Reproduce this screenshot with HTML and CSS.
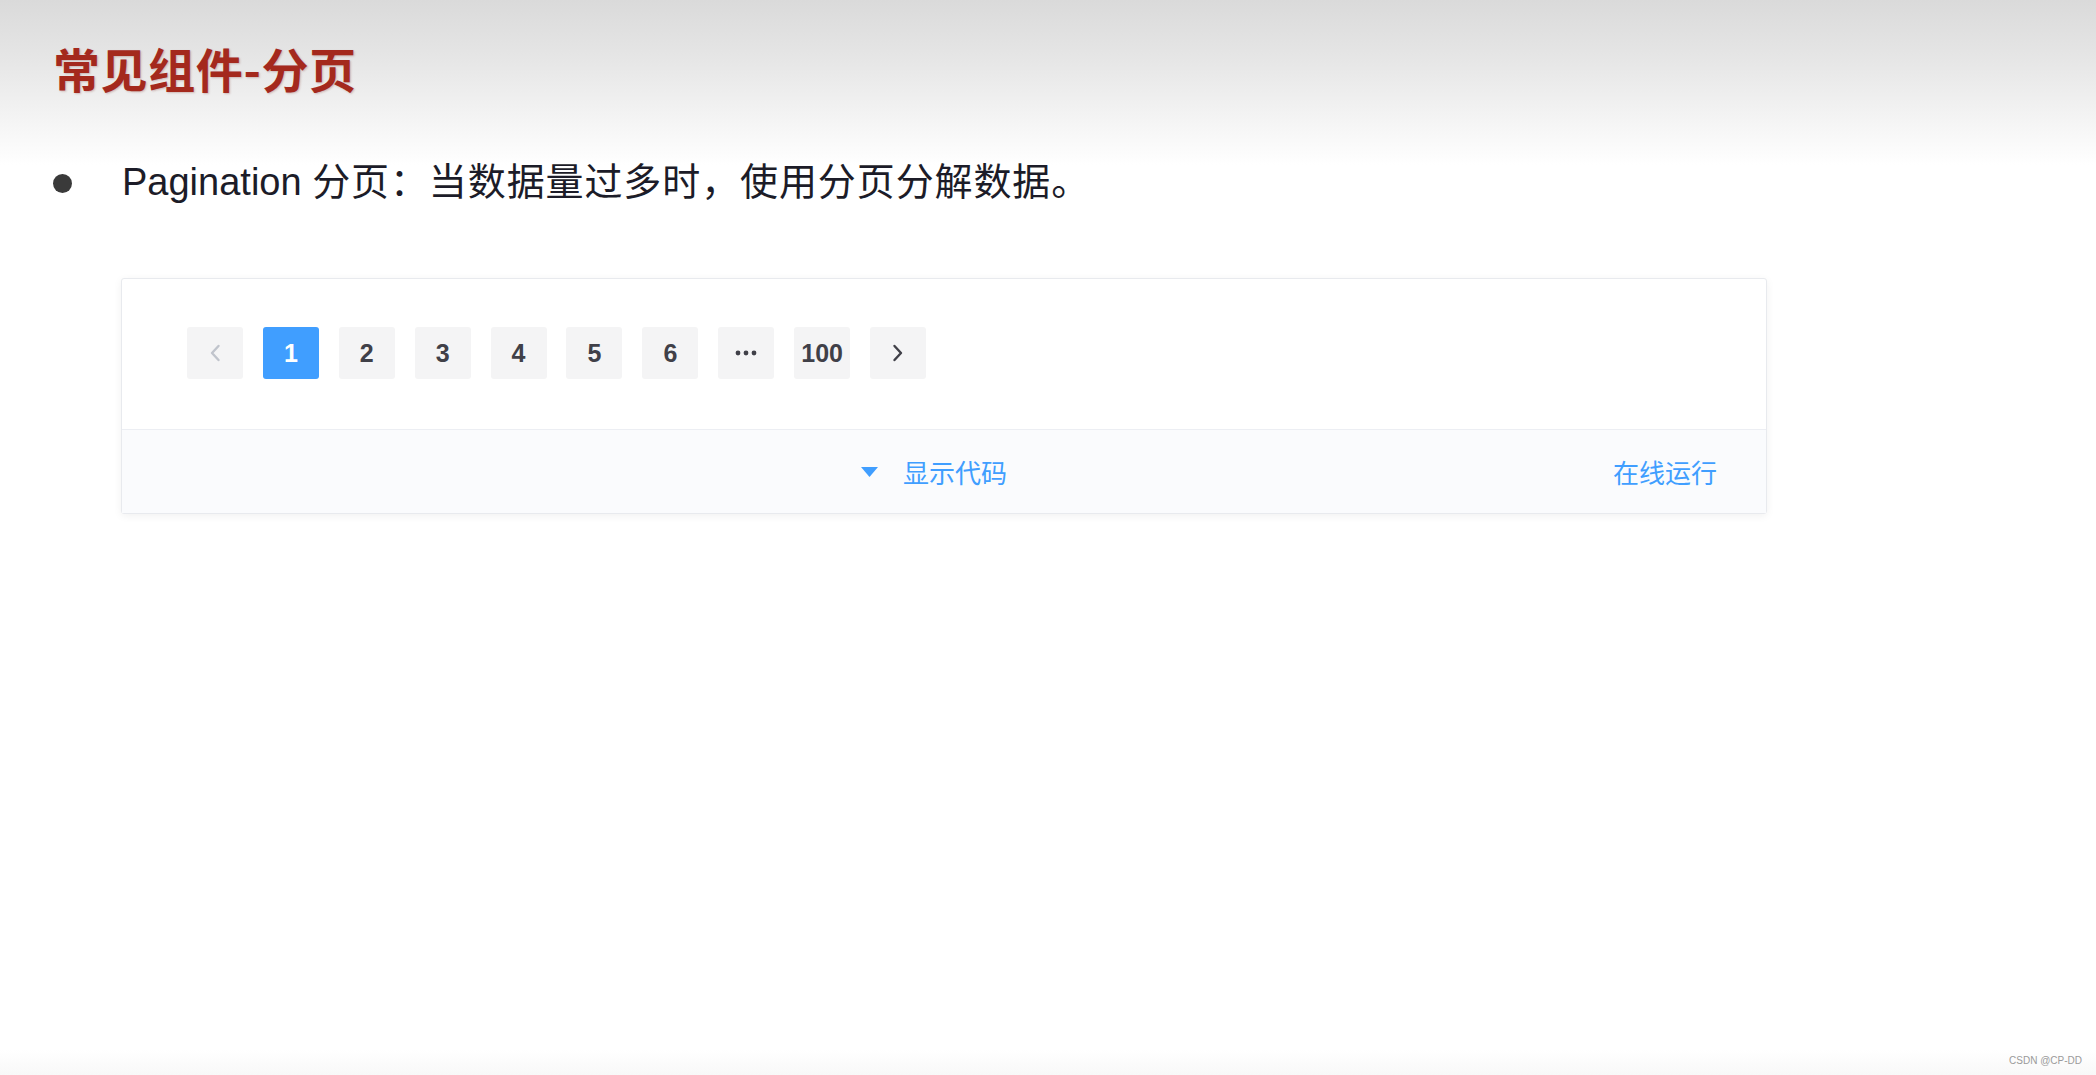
FILE: index.html
```html
<!DOCTYPE html>
<html lang="zh-CN">
<head>
<meta charset="utf-8">
<title>常见组件-分页</title>
<link rel="stylesheet" href="styles.css">
</head>
<body>
<div class="page">
  <header class="slide-head">
    <h1 class="slide-title">常见组件-分页</h1>
  </header>

  <ul class="points">
    <li class="point"><span class="dot"></span><span class="point-text">Pagination <span class="cjk">分页：当数据量过多时，使用分页分解数据。</span></span></li>
  </ul>

  <section class="demo">
    <div class="demo-body">
      <ul class="pager">
        <li class="pg pg-arrow is-disabled">
          <svg class="chev" width="12" height="18" viewBox="0 0 12 18"><path d="M9.5 2 L3 9 L9.5 16" fill="none" stroke="currentColor" stroke-width="2.4" stroke-linecap="round" stroke-linejoin="round"/></svg>
        </li>
        <li class="pg is-active">1</li>
        <li class="pg">2</li>
        <li class="pg">3</li>
        <li class="pg">4</li>
        <li class="pg">5</li>
        <li class="pg">6</li>
        <li class="pg pg-more">
          <svg width="22" height="6" viewBox="0 0 22 6"><circle cx="3" cy="3" r="2.4" fill="currentColor"/><circle cx="11" cy="3" r="2.4" fill="currentColor"/><circle cx="19" cy="3" r="2.4" fill="currentColor"/></svg>
        </li>
        <li class="pg">100</li>
        <li class="pg pg-arrow">
          <svg class="chev" width="12" height="18" viewBox="0 0 12 18"><path d="M2.5 2 L9 9 L2.5 16" fill="none" stroke="currentColor" stroke-width="2.4" stroke-linecap="round" stroke-linejoin="round"/></svg>
        </li>
      </ul>
    </div>
    <div class="demo-bar">
      <div class="toggle">
        <svg class="caret" width="17" height="10" viewBox="0 0 17 10"><polygon points="0,0 17,0 8.5,10" fill="currentColor"/></svg>
        <span>显示代码</span>
      </div>
      <a class="run">在线运行</a>
    </div>
  </section>

  <footer class="mark">CSDN @CP-DD</footer>
</div>
</body>
</html>
```

FILE: styles.css
```css
html, body {
  margin: 0;
  padding: 0;
}

body {
  width: 2096px;
  height: 1075px;
  overflow: hidden;
  background: #ffffff;
  font-family: "Liberation Sans", "Noto Sans CJK SC", sans-serif;
}

.page {
  display: flex;
  flex-direction: column;
  height: 1075px;
  background: linear-gradient(to bottom,
    #dadada 0px,
    #e6e6e6 60px,
    #f4f4f4 120px,
    #ffffff 165px,
    #ffffff 1050px,
    #f8f8f8 1075px);
}

.slide-head {
  padding: 44px 0 0 53px;
}

.slide-title {
  margin: 0;
  font-family: "Noto Sans CJK SC", sans-serif;
  font-size: 47px;
  line-height: 47px;
  font-weight: 700;
  letter-spacing: 0.6px;
  color: #a4291d;
  text-shadow: 1px 1px 2px rgba(120, 30, 20, 0.25);
}

.points {
  list-style: none;
  margin: 69px 0 0 0;
  padding: 0 0 0 53px;
}

.point {
  display: flex;
  align-items: center;
  gap: 50px;
}

.dot {
  width: 19px;
  height: 19px;
  border-radius: 50%;
  background: #3a3a3a;
  flex: none;
  margin-top: 3px;
}

.point-text {
  font-family: "Liberation Sans", "Noto Sans CJK SC", sans-serif;
  font-size: 38px;
  line-height: 44px;
  color: #1c1c28;
}

.cjk {
  letter-spacing: 0.9px;
}

.demo {
  margin: 74px 0 0 121px;
  width: 1646px;
  box-sizing: border-box;
  border: 1px solid #e8eaee;
  border-radius: 3px;
  background: #ffffff;
  box-shadow: 0 2px 8px rgba(0, 0, 0, 0.06);
}

.demo-body {
  padding: 48px 0 50px 65px;
}

.pager {
  list-style: none;
  margin: 0;
  padding: 0;
  display: flex;
  gap: 19.9px;
}

.pg {
  width: 56px;
  height: 52px;
  display: flex;
  align-items: center;
  justify-content: center;
  background: #f4f4f5;
  border-radius: 3px;
  font-family: "Liberation Sans", sans-serif;
  font-weight: 700;
  font-size: 25px;
  color: #404048;
}

.pg.is-active {
  background: #409eff;
  color: #ffffff;
}

.pg-arrow {
  color: #404048;
}

.pg.is-disabled {
  color: #c0c4cc;
}

.pg-more {
  color: #404048;
}

.demo-bar {
  border-top: 1px solid #eceef3;
  background: #fafbfd;
  height: 83px;
  display: grid;
  grid-template-columns: 1fr auto 1fr;
  align-items: center;
  padding: 0 49px;
  font-family: "Noto Sans CJK SC", sans-serif;
  font-size: 26px;
  color: #409eff;
}

.toggle {
  grid-column: 2;
  display: flex;
  align-items: center;
  gap: 25px;
  margin-right: 20px;
}

.caret {
  display: block;
}

.run {
  grid-column: 3;
  justify-self: end;
  color: #409eff;
  text-decoration: none;
}

.mark {
  margin-top: auto;
  align-self: flex-end;
  padding: 0 14px 8px 0;
  font-family: "Liberation Sans", sans-serif;
  font-size: 10px;
  line-height: 12px;
  color: #9a9a9a;
}
```
